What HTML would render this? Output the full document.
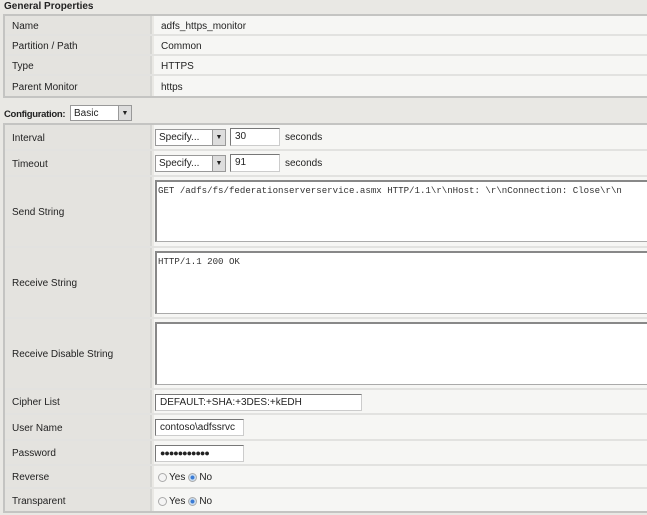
<!DOCTYPE html>
<html><head><style>
*{margin:0;padding:0;box-sizing:border-box}
body{width:647px;height:515px;background:#e9e8e4;font-family:"Liberation Sans",Arial,sans-serif;font-size:10px;color:#222;position:relative;overflow:hidden}
.a{position:absolute}
.tbl{position:absolute;left:3px;width:650px;border:2px solid #c4c4c2;border-right:none}
.row{position:absolute;left:0;width:100%;border-bottom:2px solid #e2e2e0}
.lab{position:absolute;left:0;top:0;bottom:0;width:147px;background:#e4e3df;border-right:2px solid #d6d6d3;padding-left:7px;padding-top:2px;display:flex;align-items:center}
.val{position:absolute;left:149px;right:0;top:0;bottom:0;background:#f6f6f4;padding-left:7px;padding-top:2px;display:flex;align-items:center}
.inp{position:absolute;background:#fff;border:1px solid #ccc;border-top:1px solid #777;border-left:1px solid #777;font-size:10px;padding-left:4px;line-height:15px}
.sel{position:absolute;background:#fff;border:1px solid #999;font-size:10px;padding-left:3px;line-height:15px}
.sel i{position:absolute;right:0;top:0;width:13px;height:100%;background:#ddd;border-left:1px solid #999;font-style:normal;font-size:7px;text-align:center}
.ta{position:absolute;left:155px;width:500px;background:#fff;border:1px solid #aaa;border-top:2px solid #888;border-left:2px solid #888;border-right:none;font-family:"Liberation Mono",monospace;font-size:9.1px;padding:3px 1px;color:#333}
.rad{display:inline-block;width:9px;height:9px;border-radius:50%;border:1px solid #aaa;background:#f4f4f4;vertical-align:-1px;margin-right:2px}
.rad.on{background:radial-gradient(#3a7bd5 35%,#cde 45%)}
</style></head><body>
<div class="a" style="left:4px;top:1px;font-weight:bold;font-size:10px">General Properties</div>
<div class="tbl" style="top:14px;height:84px">
 <div class="row" style="top:0;height:20px"><div class="lab">Name</div><div class="val">adfs_https_monitor</div></div>
 <div class="row" style="top:20px;height:20px"><div class="lab">Partition / Path</div><div class="val">Common</div></div>
 <div class="row" style="top:40px;height:20px"><div class="lab">Type</div><div class="val">HTTPS</div></div>
 <div class="row" style="top:60px;height:20px;border:none"><div class="lab">Parent Monitor</div><div class="val">https</div></div>
</div>
<div class="a" style="left:4px;top:109px;font-weight:bold;font-size:9.5px;letter-spacing:-0.3px">Configuration:</div>
<div class="sel" style="left:70px;top:105px;width:62px;height:16px">Basic<i>▼</i></div>
<div class="tbl" style="top:123px;height:390px">
 <div class="row" style="top:0;height:26px"><div class="lab">Interval</div><div class="val"></div></div>
 <div class="row" style="top:26px;height:26px"><div class="lab">Timeout</div><div class="val"></div></div>
 <div class="row" style="top:52px;height:71px"><div class="lab">Send String</div><div class="val"></div></div>
 <div class="row" style="top:123px;height:71px"><div class="lab">Receive String</div><div class="val"></div></div>
 <div class="row" style="top:194px;height:71px"><div class="lab">Receive Disable String</div><div class="val"></div></div>
 <div class="row" style="top:265px;height:25px"><div class="lab">Cipher List</div><div class="val"></div></div>
 <div class="row" style="top:290px;height:26px"><div class="lab">User Name</div><div class="val"></div></div>
 <div class="row" style="top:316px;height:25px"><div class="lab">Password</div><div class="val"></div></div>
 <div class="row" style="top:341px;height:23px"><div class="lab">Reverse</div><div class="val" style="padding-left:4px"><span class="rad"></span>Yes <span class="rad on" style="margin-left:3px"></span>No</div></div>
 <div class="row" style="top:364px;height:22px;border:none"><div class="lab">Transparent</div><div class="val" style="padding-left:4px"><span class="rad"></span>Yes <span class="rad on" style="margin-left:3px"></span>No</div></div>
</div>
<div class="sel" style="left:155px;top:129px;width:71px;height:17px">Specify...<i>▼</i></div>
<div class="inp" style="left:230px;top:128px;width:50px;height:18px">30</div>
<div class="a" style="left:285px;top:132px">seconds</div>
<div class="sel" style="left:155px;top:155px;width:71px;height:17px">Specify...<i>▼</i></div>
<div class="inp" style="left:230px;top:154px;width:50px;height:18px">91</div>
<div class="a" style="left:285px;top:158px">seconds</div>
<div class="ta" style="top:180px;height:62px">GET /adfs/fs/federationserverservice.asmx HTTP/1.1\r\nHost: \r\nConnection: Close\r\n</div>
<div class="ta" style="top:251px;height:63px">HTTP/1.1 200 OK</div>
<div class="ta" style="top:322px;height:63px"></div>
<div class="inp" style="left:155px;top:394px;width:207px;height:17px">DEFAULT:+SHA:+3DES:+kEDH</div>
<div class="inp" style="left:155px;top:419px;width:89px;height:17px">contoso\adfssrvc</div>
<div class="inp" style="left:155px;top:445px;width:89px;height:17px;letter-spacing:-1px;font-size:9px">●●●●●●●●●●●</div>
</body></html>
